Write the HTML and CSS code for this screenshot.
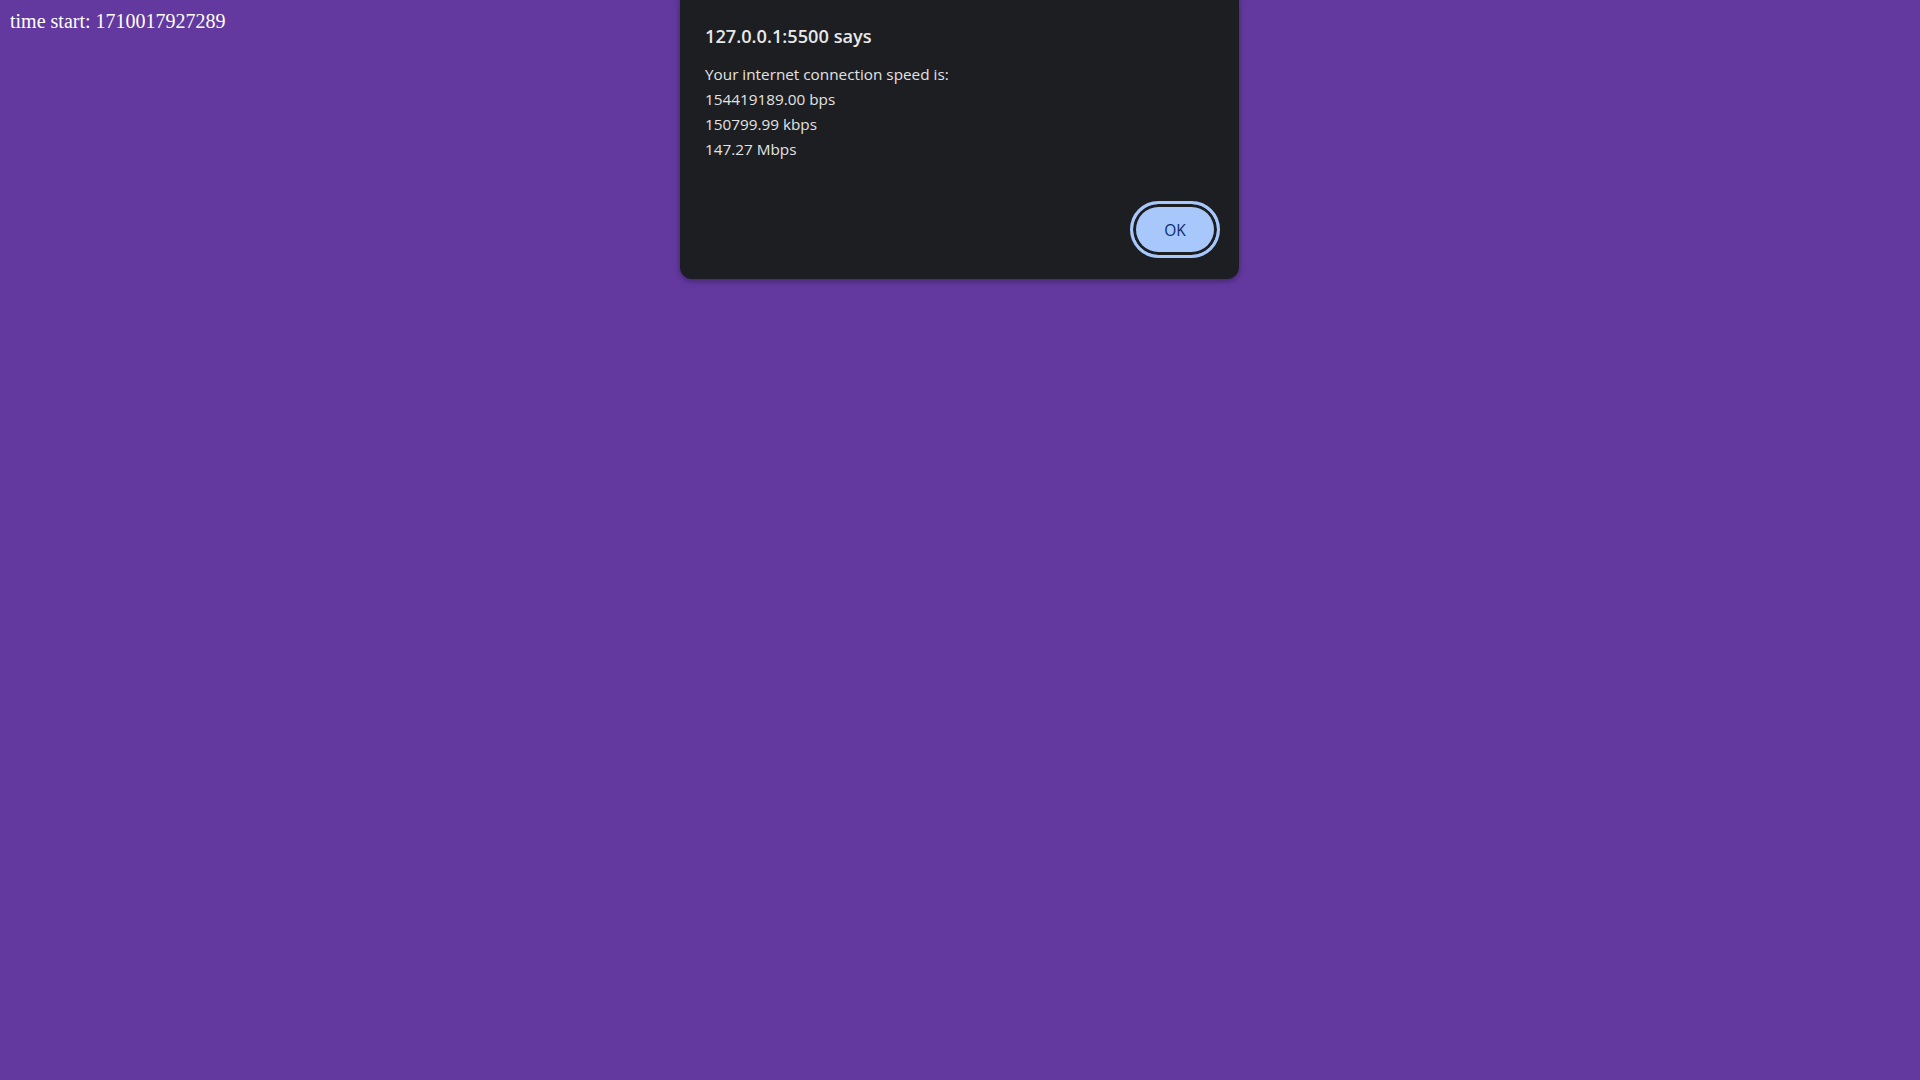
FILE: index.html
```html
<!DOCTYPE html>
<html>
<head>
<meta charset="utf-8">
<link rel="stylesheet" href="styles.css">
</head>
<body>
<div class="log">time start: 1710017927289</div>
<div class="dialog">
  <div class="title">127.0.0.1:5500 says</div>
  <div class="message">
    <div>Your internet connection speed is:</div>
    <div>154419189.00 bps</div>
    <div>150799.99 kbps</div>
    <div>147.27 Mbps</div>
  </div>
  <div class="actions">
    <button class="ok">OK</button>
  </div>
</div>
</body>
</html>
```
FILE: styles.css
```css
html, body {
  margin: 0;
  height: 100%;
}
body {
  background: #6339a0;
  padding: 10px;
  box-sizing: border-box;
  font-family: "Liberation Serif", serif;
  font-size: 20px;
  color: #ffffff;
}
.log {
  line-height: 23px;
}
.dialog {
  position: absolute;
  left: 680px;
  top: -10px;
  width: 559px;
  height: 289px;
  box-sizing: border-box;
  background: #1c1e22;
  border-radius: 12px;
  box-shadow: 0 2px 6px rgba(0,0,0,0.35);
  padding: 34px 19px 0 25px;
  font-family: "Open Sans", "Noto Sans", sans-serif;
  color: #e3e3e3;
  display: flex;
  flex-direction: column;
}
.title {
  font-size: 18.2px;
  font-weight: 600;
  line-height: 24px;
  color: #e8e8e8;
}
.message {
  margin-top: 14px;
  font-size: 15.3px;
  line-height: 25px;
}
.actions {
  display: flex;
  justify-content: flex-end;
  margin-top: 39px;
}
.ok {
  width: 90px;
  height: 57px;
  border-radius: 29px;
  background: #a8c7fa;
  border: 3px solid #a8c7fa;
  box-shadow: inset 0 0 0 3px #1c1e22;
  outline: none;
  font-family: "Open Sans", "Noto Sans", sans-serif;
  font-size: 15.5px;
  color: #062e6f;
  padding: 0;
}
```
